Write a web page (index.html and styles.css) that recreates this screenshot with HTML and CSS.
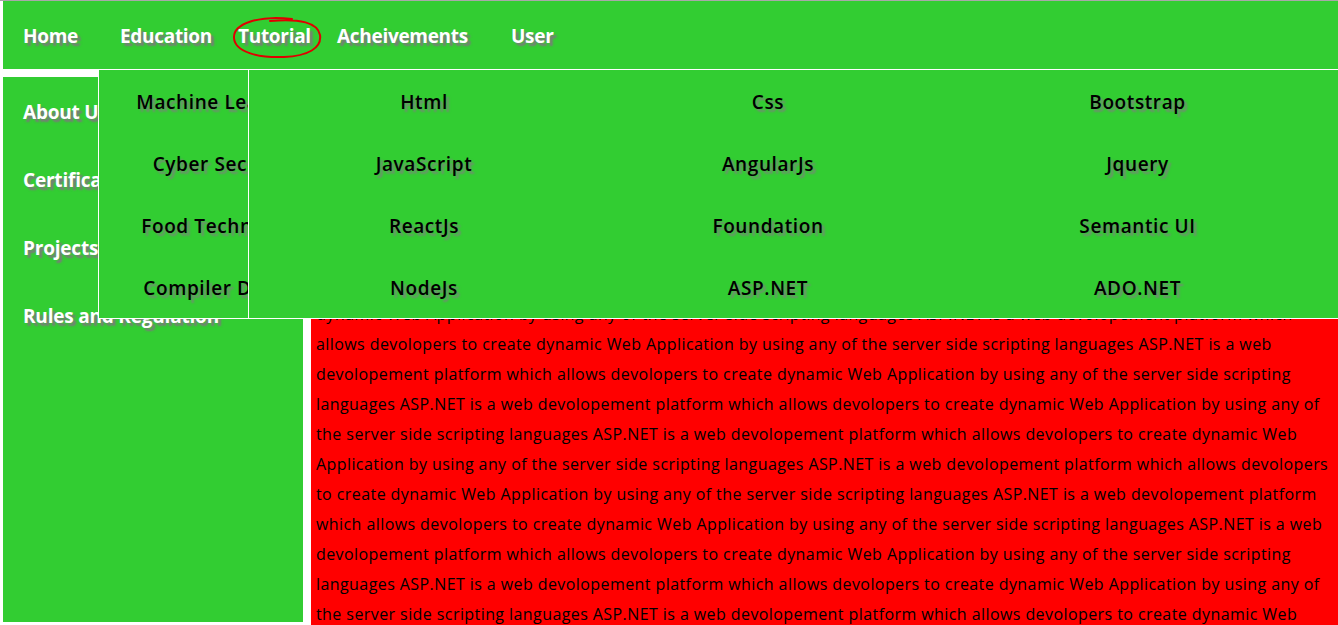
FILE: index.html
```html
<!DOCTYPE html>
<html>
<head>
<meta charset="utf-8">
<title>Tutorial</title>
<link rel="stylesheet" href="styles.css">
</head>
<body>
<div class="page">
  <nav class="topnav">
    <ul class="nav-list">
      <li><a href="#">Home</a></li>
      <li><a href="#">Education</a></li>
      <li><a href="#">Tutorial</a></li>
      <li><a href="#">Acheivements</a></li>
      <li><a href="#">User</a></li>
    </ul>
  </nav>
  <div class="main">
    <aside class="sidebar">
      <ul class="side-list">
        <li><a href="#">About Us</a></li>
        <li><a href="#">Certifications</a></li>
        <li><a href="#">Projects</a></li>
        <li><a href="#">Rules and Regulation</a></li>
      </ul>
    </aside>
    <section class="content">
      <p class="text">ASP.NET is a web devolopement platform which allows devolopers to create dynamic Web Application by using any of the server side<br>
scripting languages ASP.NET is a web devolopement platform which allows devolopers to create dynamic Web Application by using<br>
any of the server side scripting languages ASP.NET is a web devolopement platform which allows devolopers to create dynamic<br>
Web Application by using any of the server side scripting languages ASP.NET is a web devolopement platform which allows<br>
devolopers to create dynamic Web Application by using any of the server side scripting languages ASP.NET is a web devolopement<br>
platform which allows devolopers to create dynamic Web Application by using any of the server side scripting languages ASP.NET<br>
is a web devolopement platform which allows devolopers to create<br>
dynamic Web Application by using any of the server side scripting languages ASP.NET is a web devolopement platform which<br>
allows devolopers to create dynamic Web Application by using any of the server side scripting languages ASP.NET is a web<br>
devolopement platform which allows devolopers to create dynamic Web Application by using any of the server side scripting<br>
languages ASP.NET is a web devolopement platform which allows devolopers to create dynamic Web Application by using any of<br>
the server side scripting languages ASP.NET is a web devolopement platform which allows devolopers to create dynamic Web<br>
Application by using any of the server side scripting languages ASP.NET is a web devolopement platform which allows devolopers<br>
to create dynamic Web Application by using any of the server side scripting languages ASP.NET is a web devolopement platform<br>
which allows devolopers to create dynamic Web Application by using any of the server side scripting languages ASP.NET is a web<br>
devolopement platform which allows devolopers to create dynamic Web Application by using any of the server side scripting<br>
languages ASP.NET is a web devolopement platform which allows devolopers to create dynamic Web Application by using any of<br>
the server side scripting languages ASP.NET is a web devolopement platform which allows devolopers to create dynamic Web</p>
    </section>
  </div>

  <div class="dropdown">
    <div class="dd-left">
      <ul class="dd-left-list">
        <li>Machine Learning</li>
        <li>Cyber Security</li>
        <li>Food Technology</li>
        <li>Compiler Design</li>
      </ul>
    </div>
    <ul class="dd-grid">
      <li>Html</li><li>Css</li><li>Bootstrap</li>
      <li>JavaScript</li><li>AngularJs</li><li>Jquery</li>
      <li>ReactJs</li><li>Foundation</li><li>Semantic UI</li>
      <li>NodeJs</li><li>ASP.NET</li><li>ADO.NET</li>
    </ul>
  </div>

  <svg class="annot" width="100" height="50" viewBox="228 14 100 50">
    <path d="M292 19 C258 15 233 24 234 38 C235 52 258 58 284 57 C308 56 322 48 320 35 C318 23 300 18 270 21" fill="none" stroke="#e00000" stroke-width="2" stroke-linecap="round"/>
  </svg>
</div>
</body>
</html>
```
FILE: styles.css
```css
html, body {
  margin: 0;
  padding: 0;
  background: #ffffff;
  overflow: hidden;
}

.page {
  position: relative;
  width: 1338px;
  height: 625px;
  border-top: 1px solid #a8a8a8;
  box-sizing: border-box;
  padding-left: 3px;
  font-family: "Open Sans", "DejaVu Sans", sans-serif;
}

ul {
  list-style: none;
  margin: 0;
  padding: 0;
}

a {
  text-decoration: none;
  color: inherit;
}

/* top navigation */
.topnav {
  height: 68px;
  background: #32cd32;
  display: flex;
  align-items: center;
}

.nav-list {
  display: grid;
  grid-template-columns: 97px 118px 99px 174px auto;
  padding-left: 20px;
  padding-top: 2px;
}

.nav-list li {
  color: #ffffff;
  font-weight: 700;
  font-size: 19px;
  letter-spacing: -0.3px;
  text-shadow: 3px 3px 2px #7a7a7a;
}

/* main area */
.main {
  display: flex;
  gap: 8px;
  margin-top: 8px;
}

.sidebar {
  width: 300px;
  height: 545px;
  background: #32cd32;
  flex-shrink: 0;
}

.side-list {
  padding-left: 20px;
}

.side-list li {
  height: 68px;
  display: flex;
  align-items: center;
  padding-top: 2px;
  box-sizing: border-box;
  color: #ffffff;
  font-weight: 700;
  font-size: 19px;
  letter-spacing: -0.2px;
  text-shadow: 3px 3px 2px #7a7a7a;
}

.content {
  flex: 1;
  height: 560px;
  background: #ff0000;
  overflow: hidden;
}

.text {
  margin: 0;
  padding: 12px 0 0 5px;
  font-size: 16px;
  letter-spacing: 0.42px;
  line-height: 30px;
  color: #000000;
  white-space: nowrap;
}

/* dropdown */
.dropdown {
  position: absolute;
  top: 68px;
  left: 98px;
  right: 0;
  height: 250px;
  box-sizing: border-box;
  border: 1px solid #ffffff;
  border-right: none;
  background: #32cd32;
  display: flex;
}

.dd-left {
  width: 149px;
  overflow: hidden;
  flex-shrink: 0;
  border-right: 1px solid #ffffff;
}

.dd-left-list {
  width: 248px;
}

.dd-left-list li,
.dd-grid li {
  height: 62px;
  display: flex;
  align-items: center;
  justify-content: center;
  color: #000000;
  font-weight: 600;
  font-size: 19px;
  letter-spacing: 0.6px;
  text-shadow: 3px 3px 2px #6f8f6f;
  white-space: nowrap;
  padding-top: 2px;
  box-sizing: border-box;
}

.dd-grid {
  flex: 1;
  display: grid;
  grid-template-columns: 350px 338px 1fr;
  grid-auto-rows: 62px;
}

.annot {
  position: absolute;
  left: 228px;
  top: 13px;
  overflow: visible;
}
```
